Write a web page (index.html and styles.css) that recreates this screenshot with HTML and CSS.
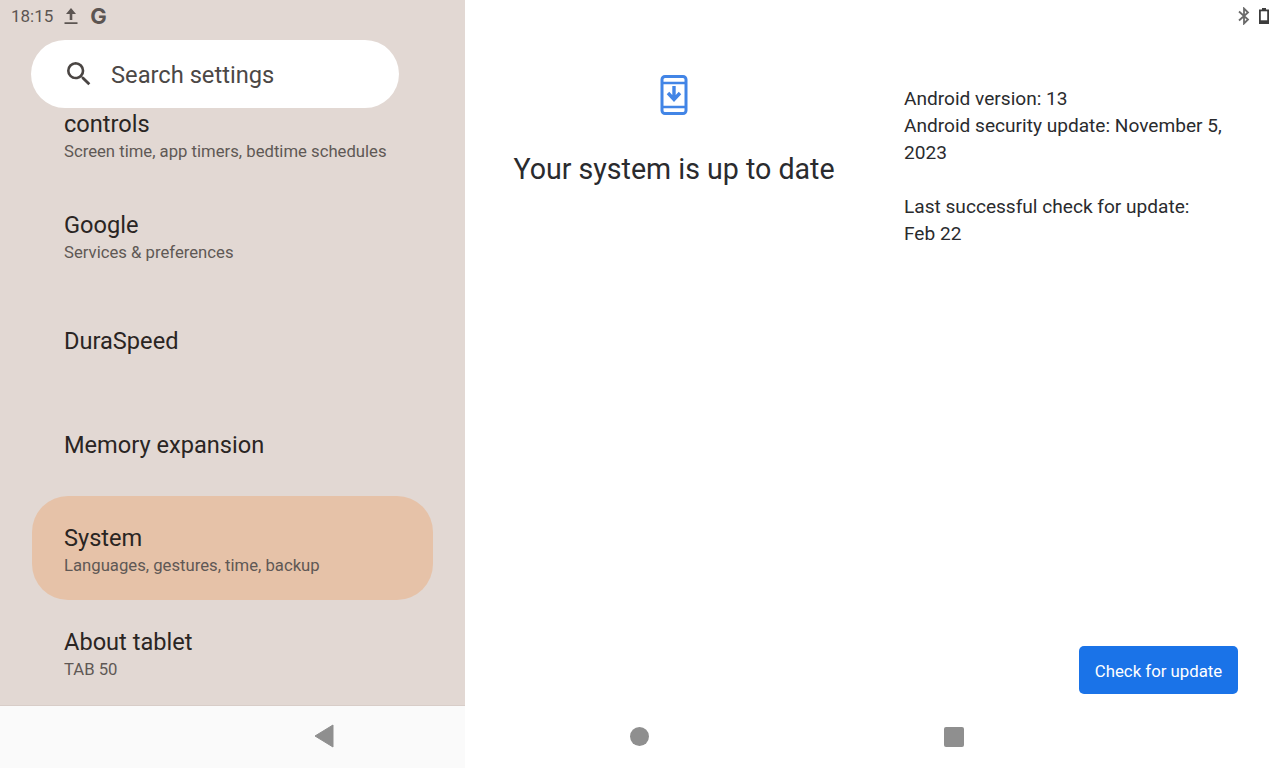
FILE: index.html
```html
<!DOCTYPE html>
<html lang="en">
<head>
  <meta charset="UTF-8">
  <title>System update</title>
  <link rel="stylesheet" href="styles.css">
</head>
<body>
  <div class="screen">
    <aside class="sidebar">
      <div class="status-left">
        <span class="clock">18:15</span>
        <svg class="status-icon" width="16" height="18" viewBox="0 0 16 18"><path d="M8 1 L13 7 H9.3 V13 H6.7 V7 H3 Z M1.5 15.2 H14.5 V17 H1.5 Z" fill="#5c5552"/></svg>
        <span class="g-mark">G</span>
      </div>
      <div class="search">
        <svg width="32" height="32" viewBox="0 0 24 24"><path d="M15.5 14h-.79l-.28-.27A6.47 6.47 0 0 0 16 9.5 6.5 6.5 0 1 0 9.5 16c1.61 0 3.09-.59 4.23-1.57l.27.28v.79l5 4.99L20.49 19l-4.99-5zm-6 0C7.01 14 5 11.99 5 9.5S7.01 5 9.5 5 14 7.01 14 9.5 11.99 14 9.5 14z" fill="#4a4543"/></svg>
        <span class="search-text">Search settings</span>
      </div>
      <ul class="menu">
        <li class="menu-item first">
          <span class="menu-title">controls</span>
          <span class="menu-sub">Screen time, app timers, bedtime schedules</span>
        </li>
        <li class="menu-item">
          <span class="menu-title">Google</span>
          <span class="menu-sub">Services &amp; preferences</span>
        </li>
        <li class="menu-item">
          <span class="menu-title">DuraSpeed</span>
        </li>
        <li class="menu-item">
          <span class="menu-title">Memory expansion</span>
        </li>
        <li class="menu-item active">
          <span class="menu-title">System</span>
          <span class="menu-sub">Languages, gestures, time, backup</span>
        </li>
        <li class="menu-item">
          <span class="menu-title">About tablet</span>
          <span class="menu-sub">TAB 50</span>
        </li>
      </ul>
    </aside>

    <main class="content">
      <div class="status-right">
        <svg width="14" height="18" viewBox="0 0 14 18"><path d="M2 4.5 L11 12.5 L7 16.5 V1.5 L11 5.5 L2 13.5" fill="none" stroke="#6a6a6a" stroke-width="1.8"/></svg>
        <svg width="12" height="18" viewBox="0 0 12 18"><path d="M4 1 H8 V2.5 H11 V17 H1 V2.5 H4 Z" fill="#3c3c3c"/><rect x="2.8" y="4.3" width="6.4" height="9" fill="#fff"/></svg>
      </div>
      <div class="update-info">
        <section class="update-state">
          <svg class="phone-icon" width="38" height="42" viewBox="0 0 38 42">
            <rect x="7" y="2.5" width="24" height="37" rx="3" fill="none" stroke="#4285e6" stroke-width="3"/>
            <path d="M7 9 H31 M7 33 H31" stroke="#4285e6" stroke-width="2.5"/>
            <path d="M19 12 V25 M13 19 L19 25.5 L25 19" fill="none" stroke="#4285e6" stroke-width="3.4"/>
          </svg>
          <h1 class="state-title">Your system is up to date</h1>
        </section>
        <section class="details">
          <p>Android version: 13<br>Android security update: November 5, 2023</p>
          <p>Last successful check for update:<br>Feb 22</p>
        </section>
      </div>
      <div class="actions">
        <button class="check-btn">Check for update</button>
      </div>
    </main>

    <div class="nav-left">
      <svg width="20" height="24" viewBox="0 0 20 24"><path d="M19 1 V23 L1 12 Z" fill="#8f8f8f" stroke="#8f8f8f" stroke-linejoin="round"/></svg>
    </div>
    <div class="nav-right">
      <span class="nav-home"></span>
      <span class="nav-recent"></span>
    </div>
  </div>
</body>
</html>
```

FILE: styles.css
```css
* {
  box-sizing: border-box;
}
body {
  margin: 0;
  font-family: Roboto, "Liberation Sans", sans-serif;
  background-color: #fff;
  color: #1f1f1f;
}
.screen {
  display: grid;
  grid-template-columns: 465px 1fr;
  grid-template-rows: 705px 63px;
  width: 1280px;
  height: 768px;
  overflow: hidden;
}

/* left settings column */
.sidebar {
  display: flex;
  flex-direction: column;
  background-color: #e2d8d3;
  overflow: hidden;
}
.status-left {
  display: flex;
  align-items: center;
  height: 32px;
  padding-left: 11px;
  color: #5c5552;
  flex-shrink: 0;
}
.clock {
  font-size: 17px;
}
.status-icon {
  margin-left: 10px;
}
.g-mark {
  margin-left: 11px;
  font-family: Inter, Roboto, sans-serif;
  font-size: 22px;
  font-weight: 700;
}
.search {
  display: flex;
  align-items: center;
  flex-shrink: 0;
  width: 368px;
  height: 68px;
  margin: 8px 0 0 31px;
  padding-left: 32px;
  background-color: #fff;
  border-radius: 34px;
}
.search-text {
  margin-left: 16px;
  padding-top: 2px;
  font-size: 23.7px;
  color: #4c4846;
}
.menu {
  flex: 1;
  margin: 0;
  padding: 0;
  list-style: none;
  overflow: hidden;
}
.menu-item {
  display: flex;
  flex-direction: column;
  justify-content: center;
  height: 104px;
  margin: 0 32px;
  padding: 2px 0 0 32px;
  border-radius: 36px;
}
.menu-item.first {
  height: 76px;
  padding-top: 1px;
  justify-content: flex-start;
}
.active,
.menu-item:last-child {
  padding-top: 4px;
}
.menu-title {
  font-size: 23.6px;
  line-height: 30px;
  color: #2a2523;
}
.menu-sub {
  margin-top: 1px;
  font-size: 16.7px;
  line-height: 24px;
  color: #5f5855;
}
.active {
  background-color: #e6c2a8;
}

/* right pane */
.content {
  display: flex;
  flex-direction: column;
}
.status-right {
  display: flex;
  justify-content: flex-end;
  align-items: center;
  gap: 7px;
  height: 32px;
  padding-right: 10px;
}
.update-info {
  display: grid;
  grid-template-columns: 418px 1fr;
  flex: 1;
}
.update-state {
  display: flex;
  flex-direction: column;
  align-items: center;
  padding: 42px 0 0 0;
}
.state-title {
  margin: 34px 0 0;
  font-size: 28.6px;
  font-weight: 400;
  line-height: 38px;
  color: #2a2b2e;
}
.details {
  padding: 53px 50px 0 21px;
  font-size: 19.1px;
  line-height: 27px;
  color: #2a2b2e;
}
.details p {
  margin: 0 0 27px;
}
.actions {
  display: flex;
  justify-content: flex-end;
  padding: 0 42px 11px 0;
}
.check-btn {
  width: 159px;
  height: 48px;
  padding: 1px 0 0;
  font-family: inherit;
  font-size: 16.8px;
  color: #fff;
  background-color: #1a73e8;
  border: none;
  border-radius: 5px;
}

/* navigation bar */
.nav-left {
  display: flex;
  align-items: center;
  padding: 0 0 2px 314px;
  background-color: #fafafa;
  border-top: 1px solid #d8cdc8;
}
.nav-right {
  display: flex;
  align-items: center;
  padding: 0 0 0 165px;
  gap: 295px;
}
.nav-home {
  width: 19px;
  height: 19px;
  border-radius: 50%;
  background-color: #8f8f8f;
}
.nav-recent {
  width: 20px;
  height: 20px;
  border-radius: 2px;
  background-color: #8f8f8f;
}
```
